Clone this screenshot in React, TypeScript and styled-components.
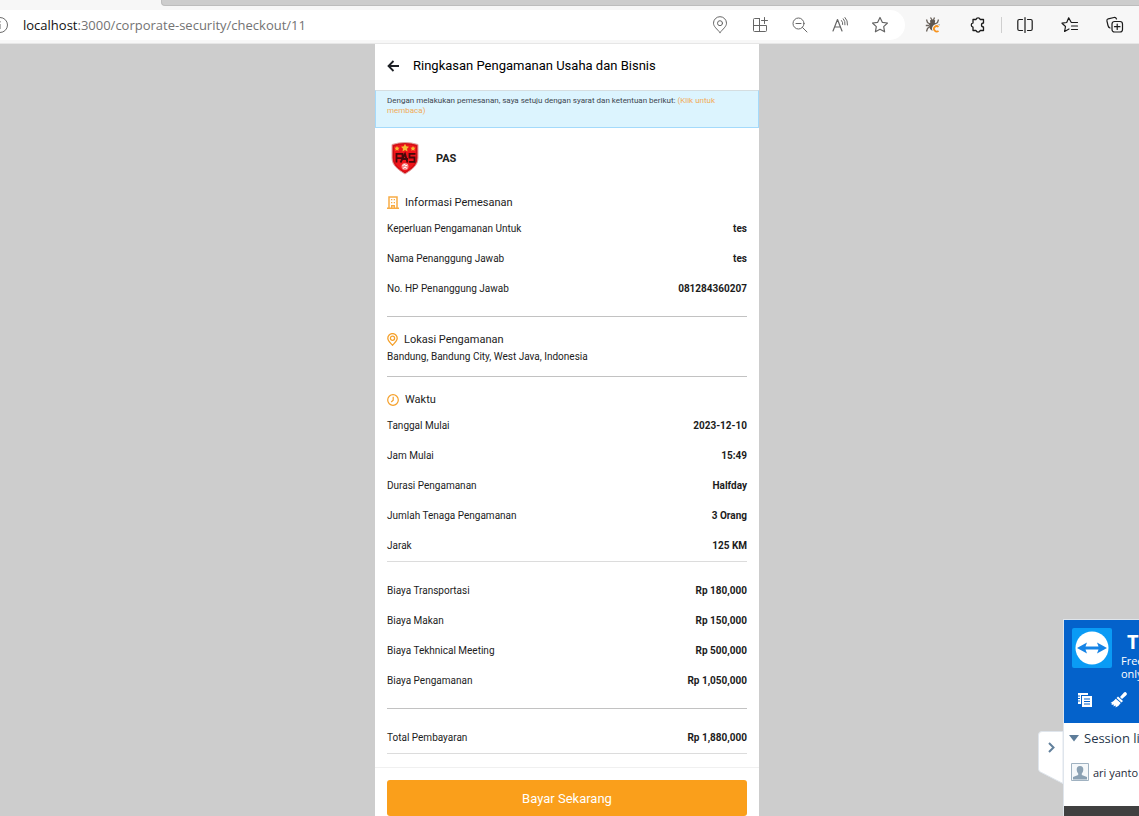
import React from "react";
import styled, { createGlobalStyle } from "styled-components";

const GlobalStyle = createGlobalStyle`
  *, *::before, *::after { box-sizing: border-box; }
  body { margin: 0; background: #cdcdcd; font-family: Roboto, "Liberation Sans", sans-serif; color: #1c1c1c; }
  button { border: 0; padding: 0; background: none; font: inherit; color: inherit; cursor: pointer; }
  h1, h2, p, dl, dd, dt { margin: 0; font-weight: 400; }
  svg { display: block; flex: none; }
`;

const Page = styled.div`
  display: flex;
  flex-direction: column;
  min-height: 100vh;
`;

const TabStrip = styled.div`
  display: flex;
  height: 6px;
  background: #f7f7f7;
`;

const ActiveTab = styled.div`
  width: 161px;
`;

const TabRest = styled.div`
  flex: 1;
  background: #cdcdcd;
  border-bottom: 1px solid #bdbdbd;
  border-left: 1px solid #bdbdbd;
  border-bottom-left-radius: 4px;
`;

const Toolbar = styled.nav`
  display: flex;
  align-items: center;
  height: 38px;
  padding: 0 2px 0 0;
  background: #f7f7f7;
  border-bottom: 1px solid #e6e6e6;
`;

const AddressBar = styled.div`
  display: flex;
  flex: 1;
  align-items: center;
  height: 30px;
  padding-right: 5px;
  margin-right: 5px;
  overflow: hidden;
  background: #fff;
  border-radius: 0 15px 15px 0;
`;

const SiteInfo = styled.button`
  margin-left: -9px;
`;

const Address = styled.button`
  flex: 1;
  margin-left: 14px;
  text-align: left;
  font-family: "Open Sans", "Noto Sans", sans-serif;
  font-size: 13px;
  line-height: 20px;
  color: #737373;
  white-space: nowrap;
`;

const Host = styled.span`
  color: #111;
`;

const ToolButton = styled.button<{ $width: number; $color?: string }>`
  display: flex;
  align-items: center;
  justify-content: center;
  width: ${(p) => p.$width}px;
  height: 30px;
  color: ${(p) => p.$color ?? "#1b1b1b"};
`;

const Separator = styled.span`
  width: 1px;
  height: 16px;
  margin-left: 1px;
  background: #cfcfcf;
`;

const Viewport = styled.div`
  display: flex;
  flex: 1;
  justify-content: center;
  padding-right: 5px;
`;

const Phone = styled.main`
  display: flex;
  flex-direction: column;
  width: 100%;
  max-width: 384px;
  background: #fff;
`;

const Header = styled.header`
  display: flex;
  align-items: center;
  gap: 14px;
  height: 46px;
  padding: 0 12px 2px;
`;

const Title = styled.h1`
  font-size: 13px;
  line-height: 20px;
  color: #000;
`;

const Notice = styled.p`
  height: 38px;
  padding: 5px 30px 0 11px;
  font-size: 8px;
  line-height: 10px;
  color: #3c4650;
  background: #dcf4fe;
  border: 1px solid #a4dafb;
  border-top-color: #d5dde0;
`;

const TermsLink = styled.a`
  color: #f2ab58;
  text-decoration: none;
`;

const Brand = styled.div`
  display: flex;
  align-items: center;
  gap: 16px;
  height: 52px;
  padding: 8px 15px 0;
`;

const BrandName = styled.strong`
  padding-top: 2px;
  font-size: 11px;
  font-weight: 700;
  line-height: 16px;
  color: #222;
`;

const Section = styled.section<{ $light?: boolean; $plain?: boolean }>`
  margin: 0 12px;
  padding: ${(p) => (p.$plain ? 13 : 11)}px 0 ${(p) => (p.$light ? 1 : 13)}px;
  border-bottom: 1px solid ${(p) => (p.$light ? "#dcdcdc" : "#c2c2c2")};
`;

const SectionTitle = styled.h2`
  display: flex;
  align-items: center;
  gap: 6px;
  height: 22px;
  padding-top: 1px;
  font-size: 11px;
  line-height: 17px;
`;

const Row = styled.div`
  display: flex;
  align-items: center;
  justify-content: space-between;
  height: 30px;
  padding-top: 2px;
  font-size: 10px;
  line-height: 14px;
`;

const Value = styled.dd`
  font-weight: 700;
`;

const Location = styled.p`
  font-size: 10px;
  line-height: 13px;
`;

const Footer = styled.footer`
  margin-top: auto;
  padding: 12px 12px 0;
  background: #fff;
  border-top: 1px solid #f0f0f0;
`;

const PayButton = styled.button`
  display: block;
  width: 100%;
  height: 36px;
  padding-top: 2px;
  border-radius: 3px;
  background: #fa9f1b;
  color: #fff;
  font-size: 13px;
  line-height: 20px;
`;

const Remote = styled.aside`
  position: fixed;
  right: 0;
  bottom: 0;
  display: flex;
  align-items: flex-end;
  font-family: "Open Sans", "Noto Sans", sans-serif;
  white-space: nowrap;
`;

const Handle = styled.button`
  margin-bottom: 32px;
`;

const Panel = styled.div`
  width: 76px;
  height: 197px;
  overflow: hidden;
  background: #fff;
  border: solid #dfe5ec;
  border-width: 1px 0 0 1px;
`;

const PanelTop = styled.div`
  height: 103px;
  padding: 8px 0 0 8px;
  background: #0462cb;
  color: #fff;
`;

const PanelBrand = styled.div`
  display: flex;
  gap: 9px;
`;

const PanelText = styled.div`
  padding-top: 2px;
  font-size: 11px;
  line-height: 13px;
`;

const PanelName = styled.div`
  padding-left: 6px;
  font-size: 20px;
  font-weight: 700;
  line-height: 24px;
`;

const PanelTools = styled.div`
  display: flex;
  gap: 17px;
  padding: 12px 0 0 5px;
`;

const SessionHead = styled.button`
  display: flex;
  align-items: center;
  gap: 5px;
  height: 30px;
  padding-left: 5px;
  font-size: 13px;
  color: #26364a;
`;

const User = styled.div`
  display: flex;
  align-items: center;
  gap: 4px;
  height: 38px;
  padding-left: 7px;
  font-size: 11px;
  color: #1e2a3a;
`;

const PanelFoot = styled.div`
  height: 10px;
  margin-top: 15px;
  background: #404040;
`;

type LineProps = { size?: number; children: React.ReactNode; width?: number };
const Line = ({ size = 18, width = 1, children }: LineProps) => (
  <svg width={size} height={size} viewBox="0 0 18 18" fill="none" stroke="currentColor" strokeWidth={width} strokeLinecap="round" strokeLinejoin="round" aria-hidden="true">
    {children}
  </svg>
);

const Shield = () => (
  <svg width="30" height="34" viewBox="0 0 30 34" aria-hidden="true">
    <path d="M2 3.5Q15-.5 28 3.500V17C28 25 21 29 15 33C9 29 2 25 2 17Z" fill="#e9151b" stroke="#dba4a4" strokeWidth="1" />
    <path d="M3.500 4.800Q15 1 26.500 4.800V17C26.500 24 20 28 15 31.500C10 28 3.500 24 3.500 17Z" fill="#f0141a" stroke="#b80f16" strokeWidth=".7" />
    <g fill="#f5bd35">
      <path d="m15 2.800 1.200 2.500 2.800.4-2 2 .5 2.700-2.500-1.300-2.500 1.300.5-2.700-2-2 2.800-.4Z" />
      <path d="m7 5 .8 1.500 1.800.3-1.300 1.200.3 1.800L7 9l-1.600.8.3-1.800L4.400 6.800l1.800-.3ZM23 5l.8 1.500 1.800.3-1.300 1.200.3 1.800L23 9l-1.600.8.3-1.800-1.300-1.200 1.800-.3Z" />
    </g>
    <path d="M6.500 21.500V12.800h6v4.400H7M10.500 21.500l4.500-8.500 2.500 8.500M13 18h5M25.500 12.800h-6v3.700h5v4.300h-5.500" fill="none" stroke="#46090b" strokeWidth="1.800" />
    <circle cx="15" cy="25.500" r="3.500" fill="#f78788" />
    <path d="m12.500 25 2-2 1 2 2-1M13 27.500l2-1.500 2 1.500" fill="none" stroke="#fff" />
  </svg>
);

const Building = () => (
  <svg width="12" height="13" viewBox="0 0 12 13" aria-hidden="true">
    <path d="M2 12V1h8v11" fill="none" stroke="#f8ac45" strokeWidth="1.500" />
    <path d="M0 11.500h12V13H0zM4 9h4v3H6.600v-1.600H5.400V12H4z" fill="#f8ac45" />
    <path d="M4 3h1.300v1.300H4zM6.700 3H8v1.300H6.700zM4 6h1.300v1.300H4zM6.700 6H8v1.300H6.700z" fill="#f8ac45" />
  </svg>
);

const Pin = () => (
  <svg width="11" height="13" viewBox="0 0 11 13" fill="none" stroke="#f5a02a" strokeWidth="1.300" aria-hidden="true">
    <path d="M5.500 12.200C3.500 10 .8 8 .8 5.300a4.700 4.700 0 0 1 9.400 0c0 2.700-2.700 4.700-4.700 6.900Z" />
    <circle cx="5.500" cy="5.300" r="2.100" />
  </svg>
);

const Clock = () => (
  <svg width="12" height="12" viewBox="0 0 12 12" fill="none" stroke="#f5a02a" strokeWidth="1.200" aria-hidden="true">
    <circle cx="6" cy="6" r="5.300" />
    <path d="M6.200 2.800V6.300L4.200 8" />
  </svg>
);

const Rows = ({ items }: { items: [string, string][] }) => (
  <dl>
    {items.map(([label, value]) => (
      <Row key={label}>
        <dt>{label}</dt>
        <Value>{value}</Value>
      </Row>
    ))}
  </dl>
);

const STAR = "m9 1.500 2.300 4.800 5.200.7-3.800 3.600.9 5.200L9 13.300l-4.600 2.500.9-5.200L1.500 7l5.200-.7Z";

export default function App() {
  return (
    <Page>
      <GlobalStyle />
      <TabStrip>
        <ActiveTab />
        <TabRest />
      </TabStrip>
      <Toolbar aria-label="Browser">
        <AddressBar>
          <SiteInfo aria-label="Site information">
            <svg width="18" height="18" viewBox="0 0 18 18" fill="none" stroke="#6b6b6b" aria-hidden="true">
              <circle cx="9" cy="9" r="7.500" />
              <path d="M9 8v5M9 5v1.500" />
            </svg>
          </SiteInfo>
          <Address>
            <Host>localhost</Host>:3000/corporate-security/checkout/11
          </Address>
          <ToolButton $width={40} $color="#666" aria-label="Location">
            <Line>
              <path d="M9 16.500C6 13 2.500 10.500 2.500 7.200a6.500 6.500 0 0 1 13 0C15.500 10.500 12 13 9 16.500Z" />
              <circle cx="9" cy="7.200" r="2.500" />
            </Line>
          </ToolButton>
          <ToolButton $width={40} $color="#666" aria-label="Apps">
            <Line>
              <path d="M8.500 2.500h-5q-1 0-1 1v11q0 1 1 1h11q1 0 1-1v-5h-13M8.500 2.500v13M13.500 1.500v6M10.500 4.500h6" />
            </Line>
          </ToolButton>
          <ToolButton $width={40} $color="#666" aria-label="Zoom out">
            <Line>
              <circle cx="7.500" cy="7.500" r="5.500" />
              <path d="M5 7.500h5M11.500 11.500l4.500 4.500" />
            </Line>
          </ToolButton>
          <ToolButton $width={40} $color="#666" aria-label="Read aloud">
            <Line width={1.2}>
              <path d="M2 15 6.500 3.500 11 15M3.500 11h6" />
              <path d="M10.500 4.500q1.500 1.500 1.200 4M12.300 2.800q2.200 2.500 1.700 6M14 1.500q3 3 2.500 7.500" strokeWidth="1" />
            </Line>
          </ToolButton>
          <ToolButton $width={40} $color="#666" aria-label="Add to favorites">
            <Line width={1.2}><path d={STAR} /></Line>
          </ToolButton>
        </AddressBar>
        <ToolButton $width={45} aria-label="Extension">
          <svg width="16" height="18" viewBox="0 0 16 18" fill="none" stroke="#6d655e" aria-hidden="true">
            <path d="M5.500 1.500 7 4M9.500 1.500 8.500 4M1.500 3.500 2.500 6.500 5 8M13.500 3.500 12.500 6.500 10 8M.8 9.500H4M14.500 9H11M1.500 15.500l1-3L5 10.500" strokeWidth="1.300" />
            <path d="M5 4.500q2.600-2 5.200 0l-.4 2.200 1.200 1.300-1 5L7.500 15 5 13 4 8l1.300-1.300Z" fill="#5f5852" stroke="none" />
            <path d="M13.500 10.800a2.700 2.700 0 1 0 0 4" stroke="#f7f7f7" strokeWidth="4" />
            <path d="M13.500 10.800a2.700 2.700 0 1 0 0 4" stroke="#f79420" strokeWidth="1.800" />
          </svg>
        </ToolButton>
        <ToolButton $width={45} aria-label="Extensions">
          <Line width={1.3}>
            <path d="M4 3.500h3a2.200 2.200 0 0 1 4.200 0H14.500V7a1.900 1.900 0 0 0 0 4V14.500h-3.300a2.200 2.200 0 0 1-4.200 0H4V11.200a2.200 2.200 0 0 1 0-4.300Z" />
          </Line>
        </ToolButton>
        <Separator />
        <ToolButton $width={45} aria-label="Split screen">
          <Line width={1.2}>
            <path d="M6.500 3.500H3.300Q1.800 3.500 1.800 5v8q0 1.500 1.500 1.500h3.200M11.500 3.500h3.200q1.500 0 1.500 1.500v8q0 1.500-1.500 1.500h-3.200M9 1.500v15" />
          </Line>
        </ToolButton>
        <ToolButton $width={45} aria-label="Favorites">
          <Line width={1.2}>
            <path d="M10 6 7.700 1.800 5.700 6.500l-4.700.7L4.500 10.500l-.9 5L8 13M10.500 6.500h6M10.500 10h6M10.500 13.500h6" />
          </Line>
        </ToolButton>
        <ToolButton $width={45} aria-label="Collections">
          <Line width={1.2}>
            <rect x="6" y="5.500" width="10.500" height="10.500" rx="2.500" />
            <path d="M11.200 8v5.500M8.500 10.700h5.500M4 12Q2.500 11.500 2 9.500L.9 4.800Q.7 3.300 2.200 2.800L8 1.500q1.800-.3 2.500 1.500" />
          </Line>
        </ToolButton>
      </Toolbar>

      <Viewport>
        <Phone>
          <Header>
            <button aria-label="Kembali">
              <svg width="12" height="12" viewBox="0 0 12 12" fill="none" stroke="#1d2025" strokeWidth="1.800" aria-hidden="true">
                <path d="M6.500 1 1.500 6l5 5M1.500 6H12" />
              </svg>
            </button>
            <Title>Ringkasan Pengamanan Usaha dan Bisnis</Title>
          </Header>
          <Notice>
            Dengan melakukan pemesanan, saya setuju dengan syarat dan ketentuan berikut:{" "}
            <TermsLink href="#syarat">(Klik untuk membaca)</TermsLink>
          </Notice>
          <Brand>
            <Shield />
            <BrandName>PAS</BrandName>
          </Brand>
          <Section>
            <SectionTitle><Building />Informasi Pemesanan</SectionTitle>
            <Rows items={[
              ["Keperluan Pengamanan Untuk", "tes"],
              ["Nama Penanggung Jawab", "tes"],
              ["No. HP Penanggung Jawab", "081284360207"],
            ]} />
          </Section>
          <Section>
            <SectionTitle><Pin />Lokasi Pengamanan</SectionTitle>
            <Location>Bandung, Bandung City, West Java, Indonesia</Location>
          </Section>
          <Section $light>
            <SectionTitle><Clock />Waktu</SectionTitle>
            <Rows items={[
              ["Tanggal Mulai", "2023-12-10"],
              ["Jam Mulai", "15:49"],
              ["Durasi Pengamanan", "Halfday"],
              ["Jumlah Tenaga Pengamanan", "3 Orang"],
              ["Jarak", "125 KM"],
            ]} />
          </Section>
          <Section $plain>
            <Rows items={[
              ["Biaya Transportasi", "Rp 180,000"],
              ["Biaya Makan", "Rp 150,000"],
              ["Biaya Tekhnical Meeting", "Rp 500,000"],
              ["Biaya Pengamanan", "Rp 1,050,000"],
            ]} />
          </Section>
          <Section $plain $light>
            <Rows items={[["Total Pembayaran", "Rp 1,880,000"]]} />
          </Section>
          <Footer>
            <PayButton>Bayar Sekarang</PayButton>
          </Footer>
        </Phone>
      </Viewport>

      <Remote aria-label="Remote session">
        <Handle aria-label="Collapse panel">
          <svg width="25" height="53" viewBox="0 0 25 53" fill="none" aria-hidden="true">
            <path d="M25 .5H4Q.5.500.5 4v34q0 2 2 3L25 52.500Z" fill="#fff" stroke="#dfe5ec" />
            <path d="m11 12 4.500 4.500L11 21" stroke="#62809c" strokeWidth="2" />
          </svg>
        </Handle>
        <Panel>
          <PanelTop>
            <PanelBrand>
              <svg width="40" height="40" viewBox="0 0 40 40" aria-hidden="true">
                <rect width="40" height="40" rx="2" fill="#0a9bf5" />
                <circle cx="20" cy="20" r="16.500" fill="#fff" />
                <path d="m5 20 10-5.500-1.500 4h13L25 14.500 35 20l-10 5.500 1.500-4h-13l1.500 4Z" fill="#1583e6" />
              </svg>
              <PanelText>
                <PanelName>T</PanelName>
                <div>Free</div>
                <div>only</div>
              </PanelText>
            </PanelBrand>
            <PanelTools>
              <svg width="16" height="16" viewBox="0 0 16 16" aria-hidden="true">
                <path d="M1 1h10v2H4v9H1Z" fill="#fff" />
                <path d="M5 4h10v11H5Z" fill="#fff" />
                <path d="M7 7h6M7 9.500h6M7 12h6M1 4h2M1 6.500h2M1 9h2" stroke="#0462cb" />
              </svg>
              <svg width="17" height="16" viewBox="0 0 17 16" fill="#fff" aria-hidden="true">
                <path d="m10 5 4-4.500q1.500-1 2.500.5t-.5 2.500L12 7Z" />
                <path d="m8 4.500 5 4.500-1.500 1.500-5-4.500ZM5.800 6.700l5 4.300Q9 14 5.500 15.500l.3-2-2.300 1 .3-2-2.300.5.5-1.500L.5 11q3-1.500 5.300-4.300Z" />
              </svg>
            </PanelTools>
          </PanelTop>
          <SessionHead>
            <svg width="10" height="7" viewBox="0 0 10 7" aria-hidden="true"><path d="M0 0h10L5 6.500Z" fill="#5d7c99" /></svg>
            Session li
          </SessionHead>
          <User>
            <svg width="18" height="18" viewBox="0 0 18 18" aria-hidden="true">
              <path d="M.5.500h17v17H.5Z" fill="#f5f8fa" stroke="#a0b2c1" />
              <path d="M9 3q3.500 0 3.300 4-.3 2.500-1.500 3.500v1.500L16 14v2.500H2V14l5.200-2v-1.500Q6 9.500 5.700 7 5.500 3 9 3Z" fill="#8ba1b3" />
            </svg>
            ari yanto
          </User>
          <PanelFoot />
        </Panel>
      </Remote>
    </Page>
  );
}
